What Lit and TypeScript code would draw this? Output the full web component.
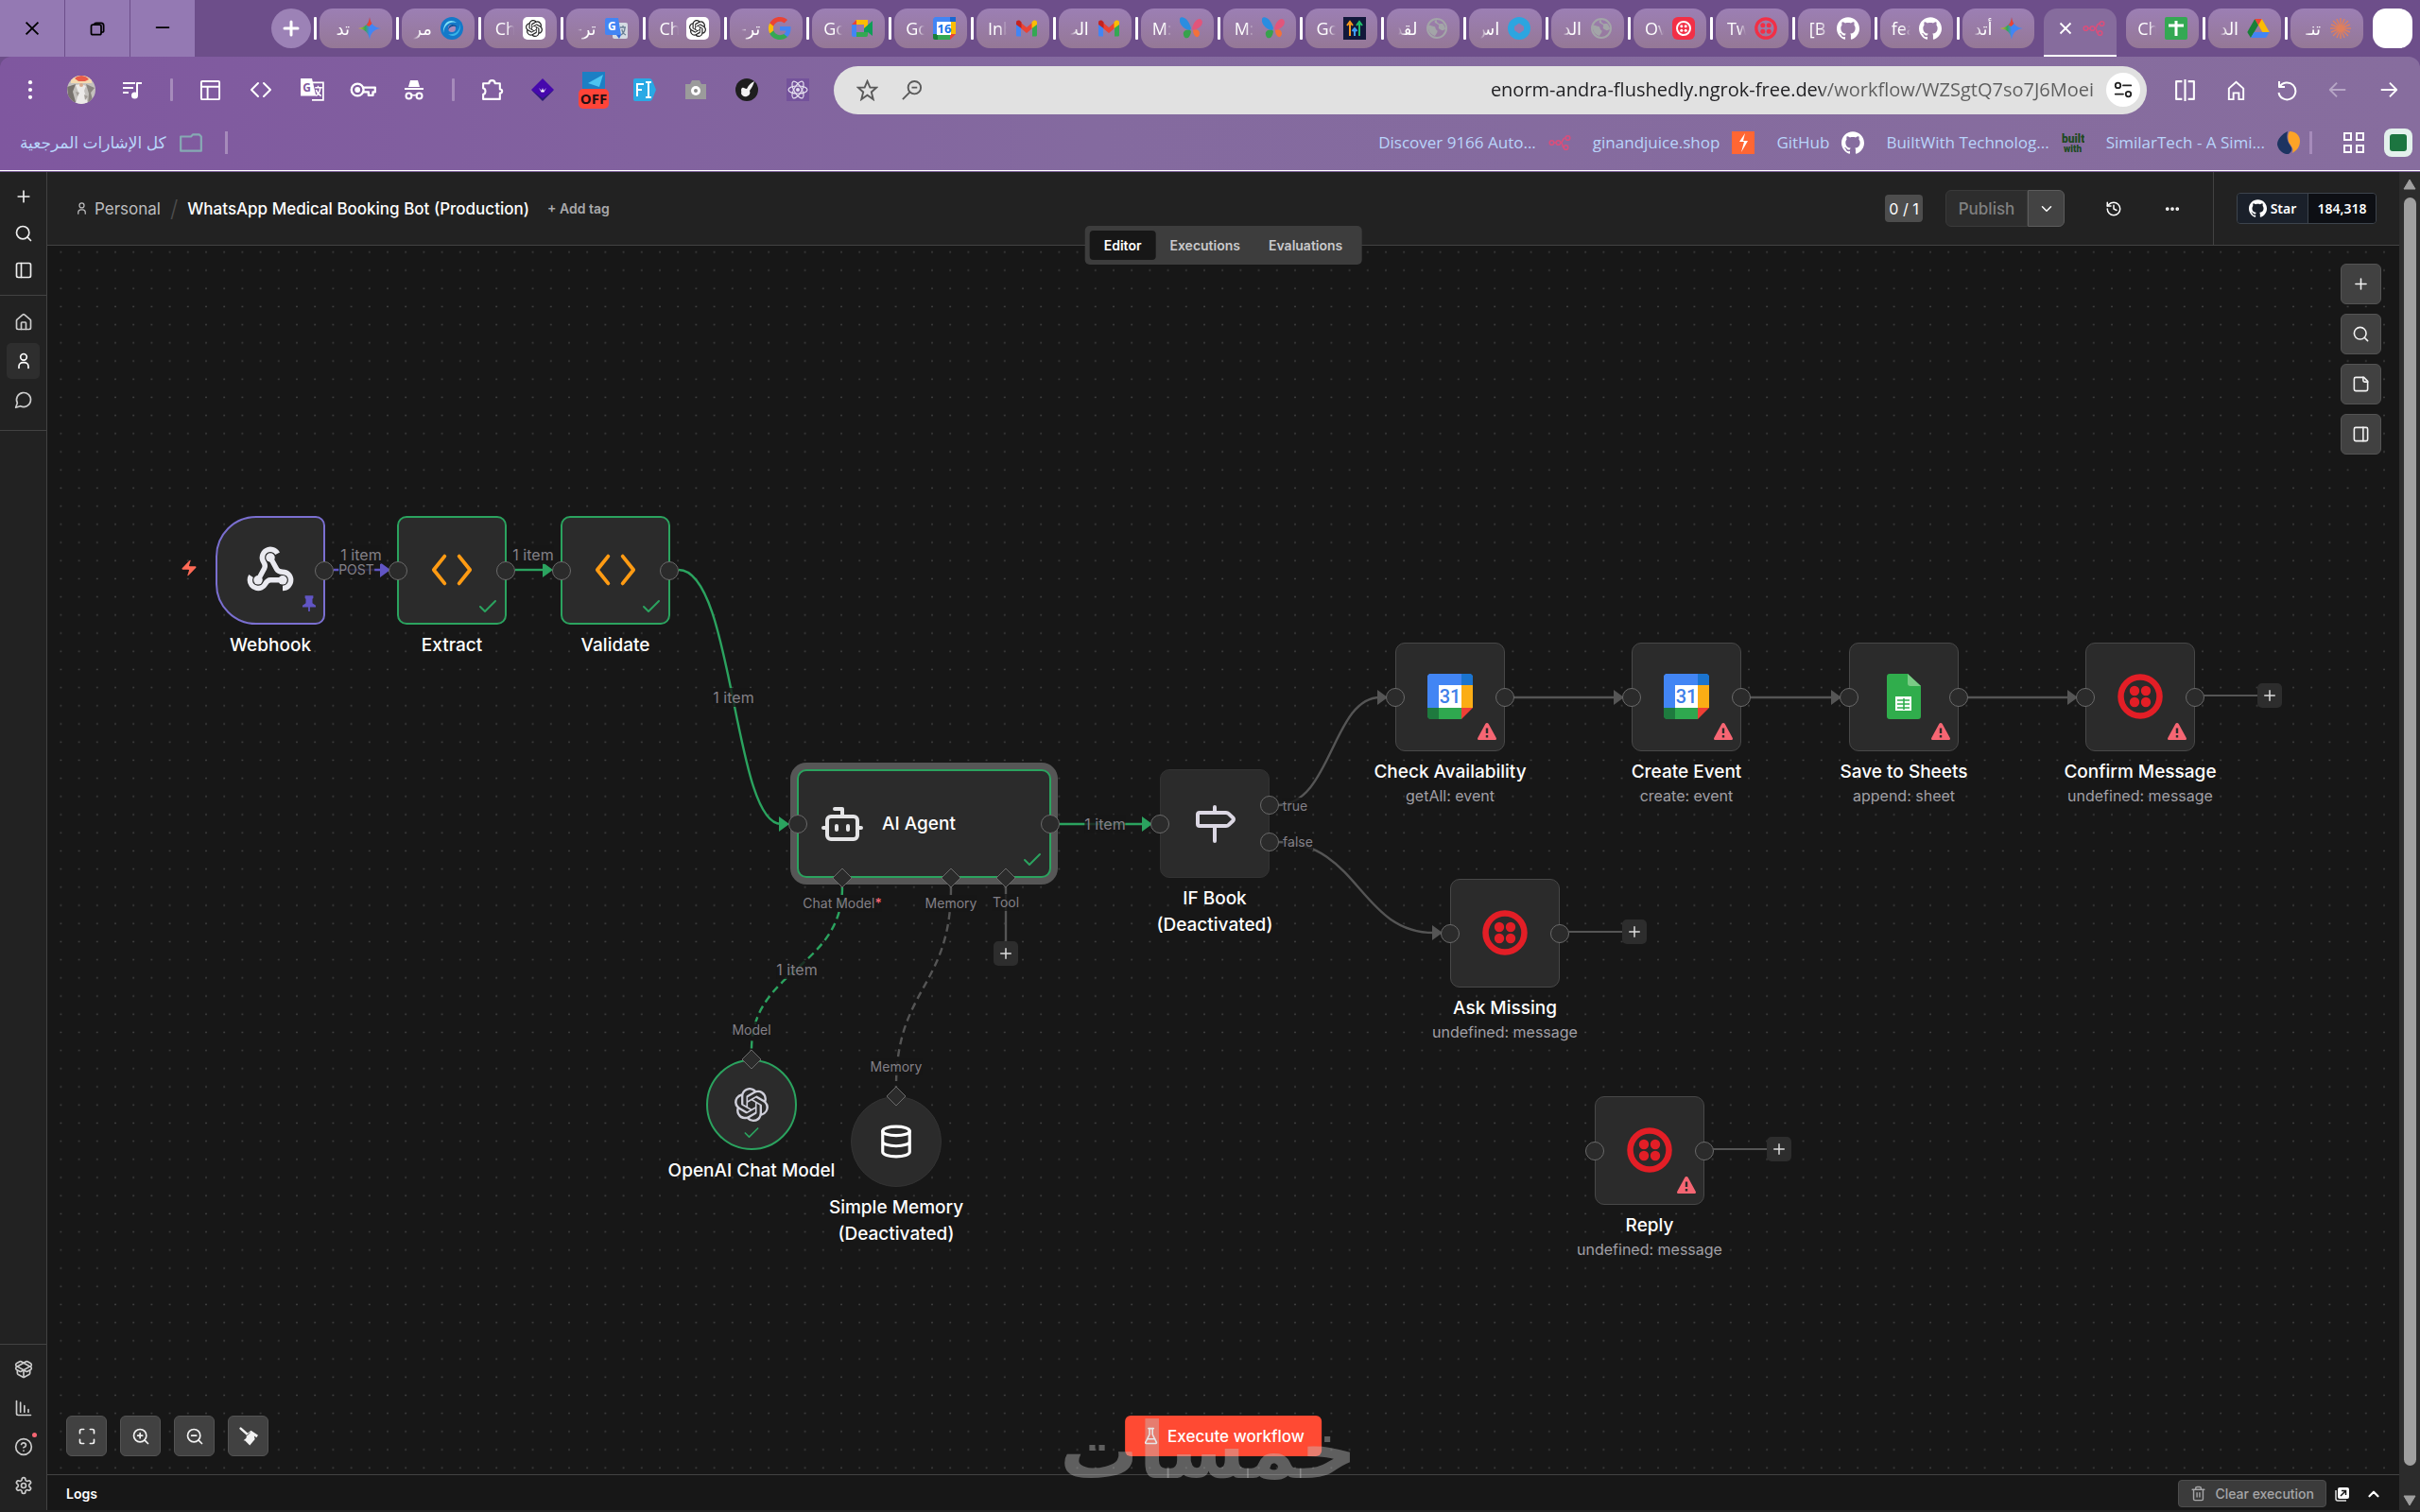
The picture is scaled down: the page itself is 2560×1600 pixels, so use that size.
import { LitElement, html, svg, css, nothing, type TemplateResult } from "lit";
import { customElement, property } from "lit/decorators.js";
import { classMap } from "lit/directives/class-map.js";
import { styleMap } from "lit/directives/style-map.js";

type Drawing = TemplateResult | TemplateResult[];

/* ---------- icon helpers ---------- */

const line = (body: Drawing, size = 20, width = 2) => html`<svg
  viewBox="0 0 24 24" width=${size} height=${size} fill="none" stroke="currentColor"
  stroke-width=${width} stroke-linecap="round" stroke-linejoin="round" aria-hidden="true">${body}</svg>`;

const solid = (body: Drawing, size = 24) => html`<svg
  viewBox="0 0 24 24" width=${size} height=${size} fill="currentColor" aria-hidden="true">${body}</svg>`;

const plus = svg`<path d="M5 12h14M12 5v14"/>`;
const search = svg`<circle cx="11" cy="11" r="8"/><path d="m21 21-4.3-4.3"/>`;
const panelLeft = svg`<rect x="3" y="3" width="18" height="18" rx="2"/><path d="M9 3v18"/>`;
const panelRight = svg`<rect x="3" y="3" width="18" height="18" rx="2"/><path d="M15 3v18"/>`;
const house = svg`<path d="M15 21v-8a1 1 0 0 0-1-1h-4a1 1 0 0 0-1 1v8"/><path d="M3 10a2 2 0 0 1 .709-1.528l7-6a2 2 0 0 1 2.582 0l7 6A2 2 0 0 1 21 10v9a2 2 0 0 1-2 2H5a2 2 0 0 1-2-2z"/>`;
const userRound = svg`<path d="M18 21v-2a5 5 0 0 0-5-5h-2a5 5 0 0 0-5 5v2"/><circle cx="12" cy="7" r="4"/>`;
const messageCircle = svg`<path d="M7.9 20A9 9 0 1 0 4 16.1L2 22Z"/>`;
const packageOpen = svg`<path d="M12 22v-9"/><path d="M15.17 2.21a1.67 1.67 0 0 1 1.63 0L21 4.57a1.93 1.93 0 0 1 0 3.36L8.82 14.79a1.655 1.655 0 0 1-1.64 0L3 12.43a1.93 1.93 0 0 1 0-3.36z"/><path d="M20 13v3.87a2.06 2.06 0 0 1-1.11 1.83l-6 3.08a1.93 1.93 0 0 1-1.78 0l-6-3.08A2.06 2.06 0 0 1 4 16.87V13"/><path d="M21 12.43a1.93 1.93 0 0 0 0-3.36L8.83 2.2a1.64 1.64 0 0 0-1.63 0L3 4.57a1.93 1.93 0 0 0 0 3.36l12.18 6.86a1.636 1.636 0 0 0 1.63 0z"/>`;
const chartBar = svg`<path d="M3 3v16a2 2 0 0 0 2 2h16"/><path d="M8 17V5M13 17V9M18 17v-3"/>`;
const helpCircle = svg`<circle cx="12" cy="12" r="10"/><path d="M9.09 9a3 3 0 0 1 5.83 1c0 2-3 3-3 3"/><path d="M12 17h.01"/>`;
const settings = svg`<path d="M12.22 2h-.44a2 2 0 0 0-2 2v.18a2 2 0 0 1-1 1.73l-.43.25a2 2 0 0 1-2 0l-.15-.08a2 2 0 0 0-2.73.73l-.22.38a2 2 0 0 0 .73 2.73l.15.1a2 2 0 0 1 1 1.72v.51a2 2 0 0 1-1 1.74l-.15.09a2 2 0 0 0-.73 2.73l.22.38a2 2 0 0 0 2.73.73l.15-.08a2 2 0 0 1 2 0l.43.25a2 2 0 0 1 1 1.73V20a2 2 0 0 0 2 2h.44a2 2 0 0 0 2-2v-.18a2 2 0 0 1 1-1.73l.43-.25a2 2 0 0 1 2 0l.15.08a2 2 0 0 0 2.73-.73l.22-.39a2 2 0 0 0-.73-2.73l-.15-.08a2 2 0 0 1-1-1.74v-.5a2 2 0 0 1 1-1.74l.15-.09a2 2 0 0 0 .73-2.73l-.22-.38a2 2 0 0 0-2.73-.73l-.15.08a2 2 0 0 1-2 0l-.43-.25a2 2 0 0 1-1-1.73V4a2 2 0 0 0-2-2z"/><circle cx="12" cy="12" r="3"/>`;
const history = svg`<path d="M3 12a9 9 0 1 0 9-9 9.75 9.75 0 0 0-6.74 2.74L3 8"/><path d="M3 3v5h5"/><path d="M12 7v5l4 2"/>`;
const ellipsis = svg`<circle cx="12" cy="12" r="1"/><circle cx="19" cy="12" r="1"/><circle cx="5" cy="12" r="1"/>`;
const chevronDown = svg`<path d="m6 9 6 6 6-6"/>`;
const chevronUp = svg`<path d="m18 15-6-6-6 6"/>`;
const stickyNote = svg`<path d="M16 3H5a2 2 0 0 0-2 2v14a2 2 0 0 0 2 2h14a2 2 0 0 0 2-2V8Z"/><path d="M15 3v4a2 2 0 0 0 2 2h4"/>`;
const maximize = svg`<path d="M8 3H5a2 2 0 0 0-2 2v3M21 8V5a2 2 0 0 0-2-2h-3M3 16v3a2 2 0 0 0 2 2h3M16 21h3a2 2 0 0 0 2-2v-3"/>`;
const zoomIn = svg`<circle cx="11" cy="11" r="8"/><path d="m21 21-4.35-4.35M11 8v6M8 11h6"/>`;
const zoomOut = svg`<circle cx="11" cy="11" r="8"/><path d="m21 21-4.35-4.35M8 11h6"/>`;
const broom = svg`<path d="M2 2 10.500 9.500" stroke="currentColor" stroke-width="3" stroke-linecap="round"/><path d="M9.500 9 15 4.500l9 6-2 3-3-2 1 4-6.500 8-6-6-2-.5 3.500-3z"/><path d="m8.500 12 5.500-5" stroke="#424242" stroke-width="1"/>`;
const flask = svg`<path d="M10 2v7.500a2 2 0 0 1-.2.9L4.700 20.550a1 1 0 0 0 .9 1.450h12.760a1 1 0 0 0 .9-1.450L14.200 10.400a2 2 0 0 1-.2-.9V2"/><path d="M8.500 2h7M7 16h10"/>`;
const trash = svg`<path d="M3 6h18M19 6v14a2 2 0 0 1-2 2H7a2 2 0 0 1-2-2V6M8 6V4a2 2 0 0 1 2-2h4a2 2 0 0 1 2 2v2M10 11v6M14 11v6"/>`;
const check = svg`<path d="M20 6 9 17l-5-5"/>`;
const zap = svg`<path d="M4 14a1 1 0 0 1-.78-1.630l9.900-10.200a.5.5 0 0 1 .86.460l-1.920 6.020A1 1 0 0 0 13 10h7a1 1 0 0 1 .78 1.630l-9.900 10.200a.5.5 0 0 1-.86-.460l1.920-6.020A1 1 0 0 0 11 14z"/>`;
const github = svg`<path d="M12 .297c-6.630 0-12 5.373-12 12 0 5.303 3.438 9.800 8.205 11.385.6.113.82-.258.82-.577 0-.285-.01-1.040-.015-2.040-3.338.724-4.042-1.610-4.042-1.610C4.422 18.070 3.633 17.700 3.633 17.700c-1.087-.744.084-.729.084-.729 1.205.084 1.838 1.236 1.838 1.236 1.070 1.835 2.809 1.305 3.495.998.108-.776.417-1.305.76-1.605-2.665-.3-5.466-1.332-5.466-5.930 0-1.310.465-2.380 1.235-3.220-.135-.303-.54-1.523.105-3.176 0 0 1.005-.322 3.300 1.230.96-.267 1.980-.399 3-.405 1.020.006 2.040.138 3 .405 2.280-1.552 3.285-1.230 3.285-1.230.645 1.653.24 2.873.12 3.176.765.84 1.230 1.910 1.230 3.220 0 4.610-2.805 5.625-5.475 5.920.42.36.81 1.096.81 2.220 0 1.606-.015 2.896-.015 3.286 0 .315.21.69.825.57C20.565 22.092 24 17.592 24 12.297c0-6.627-5.373-12-12-12"/>`;
const openai = svg`<path d="M22.2819 9.8211a5.9847 5.9847 0 0 0-.5157-4.9108 6.0462 6.0462 0 0 0-6.5098-2.9A6.0651 6.0651 0 0 0 4.9807 4.1818a5.9847 5.9847 0 0 0-3.9977 2.9 6.0462 6.0462 0 0 0 .7427 7.0966 5.98 5.98 0 0 0 .511 4.9107 6.051 6.051 0 0 0 6.5146 2.9001A5.9847 5.9847 0 0 0 13.2599 24a6.0557 6.0557 0 0 0 5.7718-4.2058 5.9894 5.9894 0 0 0 3.9977-2.9001 6.0557 6.0557 0 0 0-.7475-7.0729zm-9.022 12.6081a4.4755 4.4755 0 0 1-2.8764-1.0408l.1419-.0804 4.7783-2.7582a.7948.7948 0 0 0 .3927-.6813v-6.7369l2.02 1.1686a.071.071 0 0 1 .038.052v5.5826a4.504 4.504 0 0 1-4.4945 4.4944zm-9.6607-4.1254a4.4708 4.4708 0 0 1-.5346-3.0137l.142.0852 4.783 2.7582a.7712.7712 0 0 0 .7806 0l5.8428-3.3685v2.3324a.0804.0804 0 0 1-.0332.0615L9.74 19.9502a4.4992 4.4992 0 0 1-6.1408-1.6464zM2.3408 7.8956a4.485 4.485 0 0 1 2.3655-1.9728V11.6a.7664.7664 0 0 0 .3879.6765l5.8144 3.3543-2.0201 1.1685a.0757.0757 0 0 1-.071 0l-4.8303-2.7865A4.504 4.504 0 0 1 2.3408 7.872zm16.5963 3.8558L13.1038 8.364 15.1192 7.2a.0757.0757 0 0 1 .071 0l4.8303 2.7913a4.4944 4.4944 0 0 1-.6765 8.1042v-5.6772a.79.79 0 0 0-.407-.667zm2.0107-3.0231l-.142-.0852-4.7735-2.7818a.7759.7759 0 0 0-.7854 0L9.409 9.2297V6.8974a.0662.0662 0 0 1 .0284-.0615l4.8303-2.7866a4.4992 4.4992 0 0 1 6.6802 4.66zM8.3065 12.863l-2.02-1.1638a.0804.0804 0 0 1-.038-.0567V6.0742a4.4992 4.4992 0 0 1 7.3757-3.4537l-.142.0805L8.704 5.459a.7948.7948 0 0 0-.3927.6813zm1.0976-2.3654l2.602-1.4998 2.6069 1.4998v2.9994l-2.5974 1.4997-2.6067-1.4997Z"/>`;
const n8n = svg`<g fill="none" stroke="#d94f7c" stroke-width="1.600"><circle cx="3.500" cy="12" r="2.300"/><circle cx="10.500" cy="12" r="2.300"/><circle cx="20.500" cy="7" r="2.300"/><circle cx="18.500" cy="17" r="2.300"/><path d="M6 12h2M13 12c3 0 1-5 5-5M13 12c3 0 1 5 3 5"/></g>`;

const hues: Record<string, TemplateResult> = {
  gemini: svg`<defs><linearGradient id="gem" x1="0" y1="0" x2="1" y2="0"><stop offset="0" stop-color="#fbbc04"/><stop offset=".3" stop-color="#34a853"/><stop offset=".5" stop-color="#4285f4"/><stop offset="1" stop-color="#4285f4"/></linearGradient></defs><path fill="url(#gem)" d="M12 0c1 7 4.500 11 12 12-7.500 1-11 5-12 12-1-7-4.500-11-12-12C7.500 11 11 7 12 0z"/><path fill="#ea4335" d="M12 0c.6 3 1.200 5 2.500 7L11.500 10 8.500 8.500C10.500 7 11.300 4 12 0z"/>`,
  swirl: svg`<circle cx="12" cy="12" r="12" fill="#1479c9"/><path d="M3 17c1-9 7-13 14-11-6-5-15-1-14 11z" fill="#7fe0f5"/><path d="M21 7c-1 9-6 12-13 11 6 5 14 0 13-11z" fill="#39b5e8"/><circle cx="12" cy="12" r="4" fill="#a58abb"/><path d="M8 14c2-5 7-5 10-3-3-5-10-4-10 3z" fill="#0b4f96"/>`,
  chatgpt: svg`<rect width="24" height="24" rx="5" fill="#fff"/><g fill="#222" transform="translate(3 3) scale(.75)">${openai}</g>`,
  translate: svg`<rect x="8" y="6" width="16" height="17" rx="2" fill="#d5dbe2"/><path d="M2 1h12l3 18H2a2 2 0 0 1-2-2V3c0-1 1-2 2-2z" fill="#4285f4"/><path d="m12 19 3 4 2-4z" fill="#3367d6"/><text x="3" y="14" font-size="12" font-family="Open Sans, sans-serif" font-weight="700" fill="#fff">G</text><path d="M16 11h6M19 9v2M17 19c3-2 4-5 4-8M18 13c0 3 2 5 4 6" stroke="#6b7f95" fill="none" stroke-width="1.300"/>`,
  google: svg`<path fill="#4285F4" d="M23.500 12.270c0-.8-.07-1.600-.2-2.300H12v4.500h6.500c-.28 1.500-1.100 2.700-2.400 3.500v3h3.900c2.250-2.100 3.500-5.100 3.500-8.700z"/><path fill="#34A853" d="M12 24c3.240 0 5.960-1.070 7.950-2.900l-3.900-3c-1.070.72-2.430 1.150-4.050 1.150-3.120 0-5.760-2.100-6.700-4.940H1.290v3.100C3.260 21.300 7.300 24 12 24z"/><path fill="#FBBC05" d="M5.300 14.300a7.200 7.200 0 0 1 0-4.600V6.600H1.290a12 12 0 0 0 0 10.800z"/><path fill="#EA4335" d="M12 4.750c1.770 0 3.350.6 4.600 1.800l3.430-3.430C17.950 1.190 15.230 0 12 0 7.300 0 3.260 2.700 1.290 6.600l4 3.100C6.240 6.860 8.880 4.750 12 4.750z"/>`,
  meet: svg`<path d="M5 3h13v8l-4 5H5z" fill="#fbbc04"/><path d="M1 8v11a2 2 0 0 0 2 2h3V8z" fill="#4285f4"/><path d="M6 3v5H1z" fill="#ea4335"/><path d="M6 16h12v3a2 2 0 0 1-2 2H6z" fill="#34a853"/><path d="m14 12 9-8v16l-5-4h-4z" fill="#0f9d58"/><rect x="6" y="8" width="8" height="8" fill="#9878b0"/>`,
  gcal16: svg`<path d="M2 0h16v5H0V2z" fill="#4285f4"/><path d="M18 0h6v5h-6z" fill="#1967d2"/><path d="M0 5h5v13H0z" fill="#4285f4"/><path d="M18 5h6v13h-6z" fill="#fbbc04"/><path d="M5 18h13v6H5z" fill="#34a853"/><path d="M0 18h5v6H2a2 2 0 0 1-2-2z" fill="#188038"/><path d="M18 18h6l-6 6z" fill="#ea4335"/><rect x="4" y="5" width="15" height="14" fill="#fff"/><text x="12" y="17" text-anchor="middle" font-size="13" font-weight="700" font-family="Open Sans, sans-serif" fill="#1a73e8">16</text>`,
  gmail: svg`<path d="M1 7v12c0 1 .6 1.500 1.500 1.500H6V9z" fill="#4285f4"/><path d="M18 9v11.500h3.500c1 0 1.500-.6 1.500-1.500V6z" fill="#34a853"/><path d="M6 12V6l6 5 6-5v6l-6 5z" fill="#ea4335"/><path d="M1 8V6c0-2.500 2.500-3 4-2l1.500 1.200V12z" fill="#c5221f"/><path d="M23 8V6c0-2.500-2.500-3-4-2l-1.500 1.200V12z" fill="#fbbc04"/>`,
  butterfly: svg`<path d="M12 12C9 0 1-2 0 2c-1 5 4 11 11 12z" fill="#2a8de0"/><path d="M13 12C15 4 20 0 23 3c3 4-2 10-9 11z" fill="#e2557b"/><path d="M11 14c-5-1-8 1-7 5 1 5 7 5 8-4z" fill="#37a24c"/><path d="M14 14c4-2 7 0 7 4-1 5-6 4-7-3z" fill="#f3713a"/>`,
  arrows: svg`<rect width="24" height="24" fill="#11183a"/><g fill="none" stroke-width="2"><path d="M7 20V7M4 9l3-4 3 4" stroke="#fb9a1c"/><path d="M12 20v-6M9.500 15l2.500-3 2.500 3" stroke="#3f9df6"/><path d="M17 20V7M14 9l3-4 3 4" stroke="#21c06b"/></g>`,
  globe: svg`<circle cx="12" cy="12" r="10" fill="none" stroke="#a3a5a8" stroke-width="2"/><path d="M3 9c3-1 4 1 6 1s1 3 3 4-1 4-2 6c-4-1-8-5-7-11zM12 3c-1 2 1 3 2 4s4-1 5 1 2 3 2 5c-2 0-2 2-4 1s-4-2-3-4-3-3-4-4 0-3 2-3z" fill="#a3a5a8"/>`,
  ring: svg`<circle cx="12" cy="12" r="12" fill="#2ca5e0"/><path d="M12 6.500 17 10v4l-5 3.500L7 14v-4z" fill="#947aae"/>`,
  twilioBox: svg`<rect width="24" height="24" rx="6" fill="#f22f46"/><circle cx="12" cy="12" r="7" fill="none" stroke="#fff" stroke-width="2"/><g fill="#fff"><circle cx="9.800" cy="9.800" r="1.500"/><circle cx="14.200" cy="9.800" r="1.500"/><circle cx="9.800" cy="14.200" r="1.500"/><circle cx="14.200" cy="14.200" r="1.500"/></g>`,
  twilio: svg`<circle cx="12" cy="12" r="10.200" fill="none" stroke="#f22f46" stroke-width="3.300"/><g fill="#f22f46"><circle cx="8.800" cy="8.800" r="2.500"/><circle cx="15.200" cy="8.800" r="2.500"/><circle cx="8.800" cy="15.200" r="2.500"/><circle cx="15.200" cy="15.200" r="2.500"/></g>`,
  github: svg`<g fill="#fff">${github}</g>`,
  n8n,
  sheetsCross: svg`<rect width="24" height="24" rx="2" fill="#34a853"/><path d="M12 4v16M4 9h16" stroke="#fff" stroke-width="3"/>`,
  drive: svg`<path d="M8.300 2h7.400l8 14h-7.400z" fill="#fbbc04"/><path d="M8.300 2 12 8.500 4 22 .3 16z" fill="#188038"/><path d="M8.300 2h7.400L12 8.500z" fill="#ea4335"/><path d="M7.500 16h16.200L20 22H4z" fill="#4285f4"/>`,
  claude: svg`<path d="M12 1v22M1 12h22M4 4l16 16M20 4 4 20M8 2l8 20M16 2 8 22M2 8l20 8M2 16l20-8" stroke="#e07f5c" stroke-width="1.400"/>`,
};

/* ---------- browser chrome data ---------- */

interface Tab { text: string; icon: string; active?: boolean; bar?: boolean }
const tabs: Tab[] = [
  { text: "تد", icon: "gemini" }, { text: "مر", icon: "swirl" }, { text: "Ch", icon: "chatgpt" },
  { text: "تر-", icon: "translate" }, { text: "Ch", icon: "chatgpt" }, { text: "تر-", icon: "google" },
  { text: "Go", icon: "meet" }, { text: "Go", icon: "gcal16" }, { text: "Inb", icon: "gmail" },
  { text: "الب", icon: "gmail" }, { text: "M:", icon: "butterfly" }, { text: "M:", icon: "butterfly" },
  { text: "Go", icon: "arrows" }, { text: "لقد", icon: "globe" }, { text: "اس", icon: "ring" },
  { text: "الد", icon: "globe" }, { text: "Ov", icon: "twilioBox" }, { text: "Tw", icon: "twilio" },
  { text: "[B", icon: "github" }, { text: "fea", icon: "github" }, { text: "أتد", icon: "gemini" },
  { text: "", icon: "n8n", active: true, bar: false }, { text: "Ch", icon: "sheetsCross", bar: false },
  { text: "الد", icon: "drive" }, { text: "تنـ", icon: "claude" },
];

const toolIcons: [string, TemplateResult][] = [
  ["Menu", solid(svg`<circle cx="12" cy="3.500" r="2.300"/><circle cx="12" cy="12" r="2.300"/><circle cx="12" cy="20.500" r="2.300"/>`, 22)],
  ["Profile", html`<svg viewBox="0 0 30 30" width="30" height="30" aria-hidden="true"><defs><clipPath id="av"><circle cx="15" cy="15" r="15"/></clipPath></defs><g clip-path="url(#av)"><rect width="30" height="30" fill="#c4c1bd"/><path d="M4 0h22v8H4z" fill="#f3d9b0"/><path d="M8 3c4-4 11-4 15 1l-4 2h-7z" fill="#e85c4a"/><path d="m0 12 9-3-3 8 3 11-7 2z" fill="#77726d"/><path d="m9 10 6-1 5 2-2 5 4 14H9l3-12z" fill="#eceae8"/><path d="m20 9 9 4-4 5 2 8-5 4 1-11z" fill="#8a857f"/><circle cx="15" cy="10" r="2" fill="#d8a98b"/><path d="m9 17 4 1-2 4zM18 20l4 2-3 4z" fill="#a39e98"/></g></svg>`],
  ["Media", line(svg`<path d="M2 5h13M2 10h11M2 15h6M17 18V5h5" stroke-linecap="butt"/><circle cx="14.500" cy="18" r="2.500" fill="currentColor"/>`, 24, 2)],
  ["", html``],
  ["Reading panel", line(svg`<rect x="2" y="2" width="20" height="20" rx="1"/><path d="M2 8h20M9 8v14"/>`, 23, 2)],
  ["Developer", line(svg`<path d="m9 5-7 7 7 7M15 5l7 7-7 7"/>`, 24, 2)],
  ["Translate", html`<svg viewBox="0 0 24 24" width="26" height="26" aria-hidden="true"><path d="M1 1h11l4 17H1z" fill="#fff"/><path d="M12 5h11v17H12" fill="none" stroke="#fff" stroke-width="1.600"/><text x="3" y="14" font-size="11" font-weight="700" font-family="Open Sans, sans-serif" fill="#7f5b9f">G</text><path d="M15 10h7M18 8v2M16 18c3-2 4-5 4-8M16 12c1 3 3 5 5 6" stroke="#fff" fill="none" stroke-width="1.400"/></svg>`],
  ["Passwords", line(svg`<circle cx="7" cy="12" r="5.500"/><circle cx="7" cy="12" r="1.500" fill="currentColor"/><path d="M12 10h11v4h-2v3h-4v-3h-5"/>`, 28, 2)],
  ["Incognito", solid(svg`<path d="M8 2h8l2 7H6zM2 10h20v2H2z"/><path d="M12 18c-2-1-2-1-4 0m4 0c2-1 2-1 4 0" stroke="currentColor" stroke-width="1.500" fill="none"/><circle cx="6.500" cy="18.500" r="3" fill="none" stroke="currentColor" stroke-width="2"/><circle cx="17.500" cy="18.500" r="3" fill="none" stroke="currentColor" stroke-width="2"/>`)],
  ["", html``],
  ["Extensions", line(svg`<path d="M3 5h6c0-4 6-4 6 0h5v6c3 0 3 4 0 4v6H3v-5c3 0 3-6 0-6z"/>`, 25, 2)],
  ["Wappalyzer", html`<svg viewBox="0 0 24 24" width="24" height="24" aria-hidden="true"><path d="m12 0 12 12-12 11L0 12z" fill="#4608ad"/><path d="m0 12 12 9 12-9-12 12z" fill="#2b1b74"/><path d="m8 10 3 3 1-3 1 3 3-3-3 5-1-1-1 1z" fill="#fff"/></svg>`],
  ["Blocker off", html`<svg viewBox="0 0 32 40" width="32" height="40" aria-hidden="true"><rect x="4" y="1" width="24" height="20" fill="#1c7fc4"/><path d="M10 13 26 4l-4 13z" fill="#4cc3f0"/><rect y="19" width="32" height="21" rx="5" fill="#ff4438"/><text x="16" y="35" text-anchor="middle" font-size="15" font-weight="700" font-family="Open Sans, sans-serif" fill="#241014">OFF</text></svg>`],
  ["Font inspector", html`<svg viewBox="0 0 24 24" width="24" height="24" aria-hidden="true"><path d="M2 0h15q2 0 3 2l4 10-4 10q-1 2-3 2H2q-2 0-2-2V2q0-2 2-2z" fill="#29a9e5"/><path d="M4 19V6h7M4 12h5M16 4v16M13 4h6M13 20h6" stroke="#fff" stroke-width="2" fill="none"/></svg>`],
  ["Screenshot", html`<svg viewBox="0 0 24 24" width="24" height="24" aria-hidden="true"><path d="M1 6h5l2-4h8l2 4h5v16H1z" fill="#9b9b9b"/><circle cx="12" cy="13" r="5" fill="#fff"/><circle cx="12" cy="13" r="2" fill="#8a8a8a"/></svg>`],
  ["Color picker", html`<svg viewBox="0 0 24 24" width="24" height="24" aria-hidden="true"><circle cx="12" cy="12" r="12" fill="#1e1e1e"/><path d="M20 3c-4 2-6 4-8 8-2 0-3-2-5-1-2 2 0 4-1 6 1 2 3 4 6 3 3-1 4-3 3-6 2-3 4-6 5-10z" fill="#f2f2f2"/></svg>`],
  ["React tools", html`<svg viewBox="0 0 24 24" width="24" height="24" aria-hidden="true"><rect width="24" height="24" fill="#74529b"/><g fill="none" stroke="#e6e0f0" stroke-width="1.200"><ellipse cx="12" cy="12" rx="10" ry="4"/><ellipse cx="12" cy="12" rx="10" ry="4" transform="rotate(60 12 12)"/><ellipse cx="12" cy="12" rx="10" ry="4" transform="rotate(120 12 12)"/></g><circle cx="12" cy="12" r="2" fill="#e6e0f0"/></svg>`],
];

const navIcons: [string, TemplateResult, boolean][] = [
  ["Split view", line(svg`<path d="M12 1v22M9 3H3v18h6M15 3h6v18h-6" stroke-linecap="butt"/>`, 25, 2), false],
  ["Home", line(svg`<path d="M4 10v12h5v-7h6v7h5V10l-8-7z" stroke-linejoin="miter"/>`, 23, 2), false],
  ["Reload", line(svg`<path d="M4 3v6h6M4.500 9a9 9 0 1 1-1 6" stroke-linecap="butt"/>`, 24, 2), false],
  ["Back", line(svg`<path d="M21 12H3M11 4l-8 8 8 8" stroke-linecap="butt"/>`, 22, 2), true],
  ["Forward", line(svg`<path d="M3 12h18M13 4l8 8-8 8" stroke-linecap="butt"/>`, 22, 2), false],
];

const bookmarks: [string, TemplateResult][] = [
  ["Discover 9166 Auto...", solid(n8n)],
  ["ginandjuice.shop", solid(svg`<rect width="24" height="24" fill="#ff6633"/><path d="M14 2 8 11h5l-3 11 7-12h-5z" fill="#fff"/>`)],
  ["GitHub", solid(hues.github)],
  ["BuiltWith Technolog...", solid(svg`<g fill="#1d4a22" font-family="Roboto, sans-serif" font-weight="900"><text x="0" y="12" font-size="12">built</text><text x="2" y="22" font-size="10">with</text></g>`)],
  ["SimilarTech - A Simi...", solid(svg`<path d="M11 0C5 3 0 8 0 14c1 6 7 11 12 10 3-2 4-4 3-7-3-5-6-8-4-17z" fill="#1d3461"/><path d="M13 0c6 0 11 4 11 10 0 6-3 10-8 13 2-5-2-8-4-12-1-5-1-8 1-11z" fill="#fca326"/>`)],
];

/* ---------- workflow data ---------- */

/* Pan of the canvas: flow coordinates minus this give canvas pixels. */
const PAN = { x: 50, y: 260 };

type Status = "success" | "pinned" | "error" | "idle";
interface FlowNode {
  title: string[]; sub?: string; x: number; y: number; icon: TemplateResult;
  status: Status; shape?: "trigger" | "wide" | "round"; off?: boolean;
  input?: boolean; outputs?: number; done?: boolean; add?: boolean;
}

const codeIcon = html`<svg viewBox="0 0 48 36" width="46" height="36" fill="none" stroke="#ff9b13" stroke-width="4" stroke-linecap="round" stroke-linejoin="round" aria-hidden="true"><path d="M16 3 4 18l12 15M32 3l12 15-12 15"/></svg>`;
const twilioIcon = html`<svg viewBox="0 0 48 48" width="48" height="48" fill="#e31e26" aria-hidden="true"><circle cx="24" cy="24" r="20.500" fill="none" stroke="#e31e26" stroke-width="6.500"/><circle cx="18" cy="18" r="5.200"/><circle cx="30" cy="18" r="5.200"/><circle cx="18" cy="30" r="5.200"/><circle cx="30" cy="30" r="5.200"/></svg>`;
const calendarIcon = html`<svg viewBox="0 0 48 48" width="48" height="48" aria-hidden="true"><path d="M2 0h34v12H0V2z" fill="#4285f4"/><path d="M0 12h12v24H0z" fill="#4285f4"/><path d="M36 0h10l2 2v10H36z" fill="#1b74cf"/><path d="M36 12h12v24H36z" fill="#fbad15"/><path d="M12 36h24v12H12z" fill="#2fa84f"/><path d="M0 36h12v12H2l-2-2z" fill="#1e7a3e"/><path d="M36 36h12L36 48z" fill="#ee3f35"/><rect x="12" y="12" width="24" height="24" fill="#fff"/><text x="24" y="31" text-anchor="middle" font-size="20" font-weight="500" font-family="Roboto, sans-serif" fill="#3f7fe8">31</text></svg>`;
const sheetsIcon = html`<svg viewBox="0 0 36 48" width="36" height="48" aria-hidden="true"><path d="M3 0h19l14 13v32a3 3 0 0 1-3 3H3a3 3 0 0 1-3-3V3a3 3 0 0 1 3-3z" fill="#30ad4c"/><path d="M22 0v10a3 3 0 0 0 3 3h11z" fill="#7bcb86"/><path d="M9 24h17v15H9z" fill="#fff"/><path d="M11 28h13M11 32h13M11 36h13M18 26v12" stroke="#30ad4c" stroke-width="1.600"/></svg>`;
const webhookIcon = html`<svg viewBox="0 0 24 24" width="52" height="52" fill="none" stroke="#eaeaf0" stroke-width="2.500" stroke-linecap="butt" stroke-linejoin="round" aria-hidden="true"><path d="M18 16.980h-5.990c-1.100 0-1.950.94-2.480 1.900A4 4 0 0 1 2 17c.01-.7.2-1.400.57-2"/><path d="m6 17 3.130-5.780c.53-.97.1-2.180-.5-3.100a4 4 0 1 1 6.890-4.060"/><path d="m12 6 3.130 5.730C15.660 12.700 16.900 13 18 13a4 4 0 0 1 0 8"/><g fill="#eaeaf0" stroke="none"><circle cx="12" cy="6" r="2.200"/><circle cx="6" cy="17" r="2.200"/><circle cx="18" cy="17" r="2.200"/></g></svg>`;
const botIcon = line(svg`<path d="M12 8V4H8"/><rect width="16" height="12" x="4" y="8" rx="2"/><path d="M2 14h2M20 14h2M15 13v2M9 13v2"/>`, 48, 2);
const signIcon = html`<span class="lilac">${line(svg`<path d="M12 13v8M12 3v3"/><path d="M18 6a2 2 0 0 1 1.387.56l2.307 2.220a1 1 0 0 1 0 1.440l-2.307 2.220A2 2 0 0 1 18 13H4a1 1 0 0 1-1-1V7a1 1 0 0 1 1-1z"/>`, 48, 2)}</span>`;
const dbIcon = html`<span class="bright">${line(svg`<ellipse cx="12" cy="5" rx="9" ry="3"/><path d="M3 5v14a9 3 0 0 0 18 0V5M3 12a9 3 0 0 0 18 0"/>`, 38, 2)}</span>`;
const openaiIcon = html`<span class="lilac">${solid(openai, 36)}</span>`;
const warnIcon = html`<svg viewBox="0 0 20 18" width="20" height="18" aria-label="Node has issues" role="img"><path d="M10 0c.8 0 1.300.4 1.700 1.100l8 14.600c.7 1.200 0 2.300-1.300 2.300H1.600C.3 18-.4 16.900.3 15.700l8-14.600C8.700.4 9.200 0 10 0z" fill="#f66673"/><path d="M10 5.500V11M10 13v2.500" stroke="#2b2b2b" stroke-width="2.400"/></svg>`;
const pinIcon = html`<svg viewBox="0 0 16 20" width="14" height="18" aria-label="Pinned data" role="img"><path d="M3 0h10v3l-1 1v5l4 3v2H0v-2l4-3V4L3 3z" fill="#6155c4"/><path d="M8 13v6" stroke="#6155c4" stroke-width="2"/></svg>`;

const nodes: FlowNode[] = [
  { title: ["Webhook"], x: 228, y: 546, icon: webhookIcon, status: "pinned", shape: "trigger", outputs: 1 },
  { title: ["Extract"], x: 420, y: 546, icon: codeIcon, status: "success", input: true, outputs: 1, done: true },
  { title: ["Validate"], x: 593, y: 546, icon: codeIcon, status: "success", input: true, outputs: 1, done: true },
  { title: ["AI Agent"], x: 843, y: 814, icon: botIcon, status: "success", shape: "wide", input: true, outputs: 1, done: true },
  { title: ["IF Book", "(Deactivated)"], x: 1227, y: 814, icon: signIcon, status: "idle", off: true, input: true, outputs: 2 },
  { title: ["Check Availability"], sub: "getAll: event", x: 1476, y: 680, icon: calendarIcon, status: "error", input: true, outputs: 1 },
  { title: ["Create Event"], sub: "create: event", x: 1726, y: 680, icon: calendarIcon, status: "error", input: true, outputs: 1 },
  { title: ["Save to Sheets"], sub: "append: sheet", x: 1956, y: 680, icon: sheetsIcon, status: "error", input: true, outputs: 1 },
  { title: ["Confirm Message"], sub: "undefined: message", x: 2206, y: 680, icon: twilioIcon, status: "error", input: true, outputs: 1, add: true },
  { title: ["Ask Missing"], sub: "undefined: message", x: 1534, y: 930, icon: twilioIcon, status: "idle", input: true, outputs: 1, add: true },
  { title: ["Reply"], sub: "undefined: message", x: 1687, y: 1160, icon: twilioIcon, status: "error", input: true, outputs: 1, add: true },
  { title: ["OpenAI Chat Model"], x: 747, y: 1121, icon: openaiIcon, status: "success", shape: "round", done: true },
  { title: ["Simple Memory", "(Deactivated)"], x: 900, y: 1160, icon: dbIcon, status: "idle", shape: "round", off: true },
];

interface Edge { d: string; tone: "green" | "grey" | "violet"; dashed?: boolean; tip?: [number, number] }
const edges: Edge[] = [
  { d: "M353 603H404", tone: "violet", tip: [413, 603] },
  { d: "M545 603H576", tone: "green", tip: [585, 603] },
  { d: "M718 603C776 603 776 872 826 872", tone: "green", tip: [835, 872] },
  { d: "M1121 872H1210", tone: "green", tip: [1219, 872] },
  { d: "M1351 852C1409 852 1409 738 1460 738", tone: "grey", tip: [1468, 738] },
  { d: "M1351 891C1438 891 1438 987 1517 987", tone: "grey", tip: [1526, 987] },
  { d: "M1601 738H1709", tone: "grey", tip: [1718, 738] },
  { d: "M1851 738H1939", tone: "grey", tip: [1948, 738] },
  { d: "M2081 738H2189", tone: "grey", tip: [2198, 738] },
  { d: "M891 939C891 1025 795 1025 795 1111", tone: "green", dashed: true },
  { d: "M1006 939C1006 1045 948 1045 948 1150", tone: "grey", dashed: true },
  { d: "M1064 939V996", tone: "grey" },
];

const labels: { text: string; x: number; y: number; small?: boolean; need?: boolean }[] = [
  { text: "1 item", x: 382, y: 587 }, { text: "POST", x: 377, y: 603, small: true }, { text: "1 item", x: 564, y: 587 },
  { text: "1 item", x: 776, y: 738 }, { text: "1 item", x: 1169, y: 872 }, { text: "1 item", x: 843, y: 1026 },
  { text: "true", x: 1370, y: 853, small: true }, { text: "false", x: 1373, y: 891, small: true },
  { text: "Chat Model", x: 891, y: 956, small: true, need: true }, { text: "Memory", x: 1006, y: 956, small: true },
  { text: "Tool", x: 1064, y: 955, small: true }, { text: "Model", x: 795, y: 1090, small: true },
  { text: "Memory", x: 948, y: 1129, small: true },
];

const diamonds: [number, number][] = [[891, 929], [1006, 929], [1064, 929], [795, 1121], [948, 1160]];

/* ---------- elements ---------- */

const base = css`
  * { box-sizing: border-box; }
  button, input { font: inherit; color: inherit; border: 0; background: none; margin: 0; padding: 0; }
  button { display: flex; align-items: center; justify-content: center; }
  a { color: inherit; text-decoration: none; }
  svg { display: block; flex: none; }
`;

@customElement("browser-chrome")
export class BrowserChrome extends LitElement {
  static styles = [base, css`
    :host { display: block; color: #fff; font-family: "Open Sans", "DejaVu Sans", sans-serif; }
    .strip { display: flex; align-items: center; height: 60px; background: #6d4e8a; padding-right: 8px; }
    .win { width: 68px; height: 60px; background: #9479b3; color: #000; margin-right: 1px; }
    .new { flex: none; width: 42px; height: 42px; border-radius: 50%; background: #9c82b6; margin: 0 2px 0 80px; }
    .tabs { display: flex; flex: 1; min-width: 0; height: 60px; }
    .cell { flex: 1; min-width: 0; display: flex; align-items: center; gap: 3px; padding: 0 3px 0 1px; }
    .bar { flex: none; width: 3px; height: 24px; border-radius: 1px; background: #fff; }
    .bar.none { background: transparent; }
    .tab { flex: 1; min-width: 0; height: 42px; border-radius: 14px; padding: 0 12px; justify-content: space-between;
      background: linear-gradient(#9c7fb4, #957896); }
    .tab.active { background: #866c9d; height: 51px; align-self: flex-end; border-radius: 14px 14px 0 0; border-bottom: 2px solid #fff; padding-bottom: 7px; }
    .name { width: 20px; overflow: hidden; white-space: nowrap; font-size: 18px; line-height: 28px; text-align: left;
      -webkit-mask-image: linear-gradient(90deg, #000 60%, transparent); mask-image: linear-gradient(90deg, #000 60%, transparent); }
    .name.ar { direction: rtl; text-align: right; -webkit-mask-image: linear-gradient(270deg, #000 60%, transparent); mask-image: linear-gradient(270deg, #000 60%, transparent); }
    .blank { flex: none; width: 42px; height: 42px; border-radius: 14px; background: #fff; margin-left: 7px; }
    .under { background: linear-gradient(90deg, #7f579f, #846a9f 45%, #876d9e); border-radius: 12px 12px 0 0; border-bottom: 1px solid #7b5f97; }
    .shell { background: #6d4e8a; }
    .tools { display: flex; align-items: center; height: 70px; padding: 0 6px 0 5px; }
    .tool { width: 54px; height: 54px; }
    .tool.dim { color: #b7a6c6; }
    .rule { width: 28px; display: flex; justify-content: center; }
    .rule i { width: 3px; height: 24px; background: #a68bbb; border-radius: 1px; }
    .address { flex: 1; min-width: 0; height: 51px; border-radius: 26px; background: #e1e1e1; color: #5a5a5a; display: flex; align-items: center;
      padding: 0 7px 0 24px; gap: 24px; margin: 0 13px 0 11px; }
    .url { flex: 1; min-width: 0; font-size: 20px; text-align: right; outline: 0; margin-right: -11px; line-height: 30px;
      background: linear-gradient(to left, #5d5d5d 288px, #1f1f22 288px); -webkit-background-clip: text; background-clip: text; -webkit-text-fill-color: transparent; }
    .site { flex: none; width: 36px; height: 36px; border-radius: 50%; background: #fff; color: #222; }
    .marks { display: flex; align-items: center; height: 50px; padding: 0 8px 9px 21px; color: #b9d5fb; font-size: 17px; }
    .mark { display: flex; align-items: center; gap: 13px; white-space: nowrap; margin-right: 23px; }
    .mark.last { margin-right: 10px; }
    .folder { color: #86aab4; }
    .space { flex: 1; }
    .marks .line { width: 3px; height: 24px; background: #a68bbb; }
    .apps { color: #fff; margin: 0 20px 0 32px; }
    .excel { width: 30px; height: 30px; border-radius: 8px; background: #e3f1ec; }
    .excel i { width: 18px; height: 18px; border-radius: 3px; background: #1c7540; }
    .edge { height: 1px; background: #fff; }
  `];

  private tab(t: Tab) {
    const ar = /[\u0600-\u06ff]/.test(t.text);
    return html`<div class="cell">
      <span class=${classMap({ bar: true, none: t.bar === false })}></span>
      <button class=${classMap({ tab: true, active: !!t.active })} aria-label=${t.active ? "n8n" : t.text}>
        ${t.active
          ? line(svg`<path d="M6 6l12 12M18 6 6 18" stroke-linecap="butt"/>`, 22, 2)
          : html`<span class=${classMap({ name: true, ar })}>${t.text}</span>`}
        ${solid(hues[t.icon])}
      </button>
    </div>`;
  }

  render() {
    return html`
      <div class="strip">
        <button class="win" aria-label="Close">${line(svg`<path d="M5 5l14 14M19 5 5 19" stroke-linecap="butt"/>`, 22, 2)}</button>
        <button class="win" aria-label="Restore">${line(svg`<rect x="4" y="7" width="12" height="12" rx="2"/><path d="M8 7V6q0-1 2-1h6q3 0 3 3v7q0 1-2 1"/>`, 21, 2)}</button>
        <button class="win" aria-label="Minimize">${line(svg`<path d="M5 11h14"/>`, 22, 2)}</button>
        <button class="new" aria-label="New tab">${line(plus, 24, 3)}</button>
        <div class="tabs">${tabs.map((t) => this.tab(t))}</div>
        <button class="blank" aria-label="Search tabs"></button>
      </div>
      <div class="shell"><div class="under">
        <div class="tools">
          ${toolIcons.map(([name, icon]) => name ? html`<button class="tool" aria-label=${name}>${icon}</button>` : html`<span class="rule"><i></i></span>`)}
          <div class="address">
            ${line(svg`<path d="m12 2 3 7h7l-5.500 5 2 8L12 17.500 5.500 22l2-8L2 9h7z" stroke-linejoin="miter"/>`, 23, 2)}
            ${line(svg`<circle cx="15" cy="9" r="7"/><path d="m10 14-8 8M12 9h6" stroke-linecap="butt"/>`, 23, 2)}
            <input class="url" type="text" aria-label="Address" .value=${"enorm-andra-flushedly.ngrok-free.dev/workflow/WZSgtQ7so7J6Moei"} />
            <button class="site" aria-label="Site information">${line(svg`<circle cx="6" cy="7" r="3"/><path d="M12 7h9M3 17h9"/><circle cx="18" cy="17" r="3"/>`, 22, 2)}</button>
          </div>
          ${navIcons.map(([name, icon, dim]) => html`<button class=${classMap({ tool: true, dim })} aria-label=${name}>${icon}</button>`)}
        </div>
        <div class="marks">
          <a class="mark" href="#"><span dir="rtl">كل الإشارات المرجعية</span><span class="folder">${line(svg`<path d="M2 6v14h20V6l-2-2h-6l-2 2z"/>`, 26, 2)}</span></a>
          <span class="line"></span>
          <span class="space"></span>
          ${bookmarks.map(([name, icon], i) => html`<a href="#" class=${classMap({ mark: true, last: i === bookmarks.length - 1 })}>${name}${icon}</a>`)}
          <span class="line"></span>
          <button class="apps" aria-label="Tab groups">${line(svg`<path d="M2 2h7v7H2zM15 2h7v7h-7zM2 15h7v7H2zM15 15h7v7h-7z" stroke-linejoin="miter"/>`, 24, 2)}</button>
          <button class="excel" aria-label="Sheets group"><i></i></button>
        </div>
        <div class="edge"></div>
      </div></div>`;
  }
}

@customElement("flow-node")
export class FlowNodeElement extends LitElement {
  @property({ attribute: false }) node!: FlowNode;

  static styles = [base, css`
    :host { display: block; position: absolute; color: #fff; }
    .box { position: relative; width: 116px; height: 115px; border: 1px solid #484848; border-radius: 10px; background: #2b2b2b;
      display: flex; align-items: center; justify-content: center; color: #e4e4e6; }
    .square, .trigger { padding-bottom: 2px; }
    .off { border-color: #333; padding-bottom: 0; }
    .success { border: 2px solid #2ba35f; }
    .pinned { border: 2px solid #7a6fd0; }
    .trigger { border-radius: 43px 10px 10px 43px; }
    .wide { width: 269px; box-shadow: 0 0 0 7px #565656; justify-content: flex-start; padding-left: 22px; gap: 18px; }
    .round { width: 96px; height: 96px; border-radius: 50%; }
    .wide .name { color: #fff; }
    .name { font-size: 19px; line-height: 28px; font-weight: 500; white-space: nowrap; }
    .port { position: absolute; width: 20px; height: 20px; border-radius: 50%; border: 1px solid #6a6a6a; background: #2b2b2b; top: calc(50% - 10px); }
    .in { left: -11px; }
    .out { right: -11px; }
    .yes { top: 27px; }
    .no { top: 66px; }
    .badge { position: absolute; right: 8px; bottom: 11px; color: #2ba35f; }
    .done { right: 6px; bottom: 5px; }
    .round .badge { right: 36px; bottom: 6px; }
    .lilac { color: #dcd8e4; }
    .bright { color: #fff; }
    .round .lilac { color: #cfcfda; }
    .caption { position: absolute; top: 100%; left: 50%; transform: translateX(-50%); padding-top: 8px; text-align: center; white-space: nowrap; }
    .sub { font-size: 16px; line-height: 22px; color: #a09fa5; }
    .adder { position: absolute; left: 125px; top: 43px; display: flex; align-items: center; }
    .wire { width: 57px; height: 2px; background: #555; }
    .add { width: 26px; height: 26px; border-radius: 5px; background: #2d2d2d; color: #ddd; }
  `];

  render() {
    const n = this.node;
    const wide = n.shape === "wide";
    const badge = n.done ? html`<span class="badge done">${line(check, n.shape === "round" ? 20 : 24, 2)}</span>`
      : n.status === "error" ? html`<span class="badge">${warnIcon}</span>`
      : n.status === "pinned" ? html`<span class="badge">${pinIcon}</span>` : nothing;
    return html`
      <div class=${classMap({ box: true, [n.status]: true, [n.shape ?? "square"]: true, off: !!n.off })}>
        ${n.icon}
        ${wide ? html`<span class="name">${n.title[0]}</span>` : nothing}
        ${badge}
        ${n.input ? html`<span class="port in"></span>` : nothing}
        ${n.outputs === 1 ? html`<span class="port out"></span>` : nothing}
        ${n.outputs === 2 ? html`<span class="port out yes"></span><span class="port out no"></span>` : nothing}
      </div>
      ${wide ? nothing : html`<div class="caption">
        ${n.title.map((t) => html`<div class="name">${t}</div>`)}
        ${n.sub ? html`<div class="sub">${n.sub}</div>` : nothing}
      </div>`}
      ${n.add ? html`<div class="adder"><span class="wire"></span><button class="add" aria-label="Add node">${line(plus, 18, 2)}</button></div>` : nothing}`;
  }
}

@customElement("flow-canvas")
export class FlowCanvas extends LitElement {
  static styles = [base, css`
    :host { display: block; position: relative; flex: 1; min-height: 0; background: #171717; }
    .layer { position: absolute; inset: 0; width: 100%; height: 100%; }
    .clip { position: absolute; inset: 0; overflow: hidden; }
    .green { stroke: #2ba35f; }
    .green-tip { fill: #2ba35f; }
    .grey { stroke: #555; }
    .grey-tip { fill: #555; }
    .violet { stroke: #6155c4; }
    .violet-tip { fill: #6155c4; }
    flow-node { position: absolute; }
    .label { position: absolute; transform: translate(-50%, -50%); font-size: 16px; line-height: 20px; color: #838087; background: rgba(23, 23, 23, .8); white-space: nowrap; }
    .label.small { font-size: 14px; line-height: 18px; }
    .label b { color: #f66673; font-weight: 500; }
    .tool-add { position: absolute; width: 26px; height: 26px; border-radius: 5px; background: #2d2d2d; color: #ddd; }
    .zap { position: absolute; color: #ff6a56; }
    .side { position: absolute; top: 19px; right: 19px; display: flex; flex-direction: column; gap: 10px; }
    .controls { position: absolute; left: 20px; bottom: 19px; display: flex; gap: 14px; }
    .sq { width: 43px; height: 43px; border: 1px solid #545454; border-radius: 6px; background: #414141; color: #f2f2f2; }
    .run { position: absolute; bottom: 19px; left: 50%; transform: translateX(-50%); height: 43px; padding: 0 18px; gap: 8px; border-radius: 6px;
      background: #ff4a33; color: #fff; font-size: 17px; font-weight: 500; white-space: nowrap; }
    .mark { position: absolute; left: 50%; bottom: -51px; transform: translateX(-55%); color: rgba(196, 196, 196, .42); font-family: "DejaVu Sans", sans-serif;
      font-weight: 700; font-size: 83px; line-height: 150px; white-space: nowrap; pointer-events: none; z-index: 2; }
  `];

  render() {
    const at = (x: number, y: number) => styleMap({ left: `${x - PAN.x}px`, top: `${y - PAN.y}px` });
    return html`
      <div class="clip">
        <svg class="layer" aria-hidden="true">
          <defs><pattern id="dots" width="19.2" height="19.2" x="13.4" y="-3.2" patternUnits="userSpaceOnUse"><circle cx="1" cy="10" r=".9" fill="#444"/></pattern></defs>
          <rect width="100%" height="100%" fill="url(#dots)"/>
          <g transform="translate(${-PAN.x} ${-PAN.y})" fill="none" stroke-width="2.4">
            ${edges.map((e) => svg`<path class=${e.tone} d=${e.d} stroke-dasharray=${e.dashed ? "8 5" : "none"}/>
              ${e.tip ? svg`<path class="${e.tone}-tip" d="M${e.tip[0] - 11} ${e.tip[1] - 8}l11 8-11 8z"/>` : nothing}`)}
          </g>
        </svg>
        ${nodes.map((n) => html`<flow-node .node=${n} style=${at(n.x, n.y)}></flow-node>`)}
        ${labels.map((l) => html`<span class=${classMap({ label: true, small: !!l.small })} style=${at(l.x, l.y)}>${l.text}${l.need ? html`<b>*</b>` : nothing}</span>`)}
        <svg class="layer" aria-hidden="true">
          <g transform="translate(${-PAN.x} ${-PAN.y})" fill="#2b2b2b" stroke="#6a6a6a">
            ${diamonds.map(([x, y]) => svg`<path d="M${x} ${y - 10}l10 10-10 10-10-10z"/>`)}
          </g>
        </svg>
        <button class="tool-add" aria-label="Add tool" style=${at(1051, 996)}>${line(plus, 18, 2)}</button>
        <span class="zap" style=${at(190, 591)}>${solid(zap, 20)}</span>
      </div>
      <div class="side">
        ${[["Add node", plus], ["Search nodes", search], ["Add note", stickyNote], ["Open panel", panelRight]].map(
          ([name, icon]) => html`<button class="sq" aria-label=${name}>${line(icon as TemplateResult, 19, 2)}</button>`)}
      </div>
      <div class="controls">
        <button class="sq" aria-label="Fit view">${line(maximize, 20, 2)}</button>
        <button class="sq" aria-label="Zoom in">${line(zoomIn, 20, 2)}</button>
        <button class="sq" aria-label="Zoom out">${line(zoomOut, 20, 2)}</button>
        <button class="sq" aria-label="Tidy up">${solid(broom, 20)}</button>
      </div>
      <button class="run">${line(flask, 19, 2)}Execute workflow</button>
      <div class="mark" dir="rtl">خمسات</div>`;
  }
}

@customElement("app-root")
export class AppRoot extends LitElement {
  static styles = [base, css`
    :host { display: flex; flex-direction: column; height: 100vh; min-height: 900px; overflow: hidden; background: #222;
      font-family: Inter, "DejaVu Sans", sans-serif; color: #fff; }
    .app { flex: 1; min-height: 0; display: flex; padding-bottom: 2px; }
    .rail { width: 50px; flex: none; background: #222; border-right: 1px solid #424242; display: flex; flex-direction: column; color: #ccc; }
    .top { padding: 6px 0 7px; display: flex; flex-direction: column; align-items: center; color: #eee; border-bottom: 1px solid #424242; }
    .top button { width: 35px; height: 39px; }
    .menu { padding: 9px 0 13px; display: flex; flex-direction: column; align-items: center; gap: 3px; border-bottom: 1px solid #424242; }
    .menu button, .foot button { width: 35px; height: 38px; border-radius: 5px; position: relative; }
    .menu .on { background: #2e2e2e; color: #fff; }
    .grow { flex: 1; }
    .foot { padding: 7px 0; display: flex; flex-direction: column; align-items: center; gap: 3px; border-top: 1px solid #424242; }
    .dot { position: absolute; width: 5px; height: 5px; border-radius: 50%; background: #f66673; right: 3px; top: 4px; }
    .main { flex: 1; min-width: 0; display: flex; flex-direction: column; position: relative; }
    .head { height: 78px; flex: none; background: #222; border-bottom: 1px solid #424242; display: flex; align-items: stretch; }
    .crumbs { display: flex; align-items: center; padding-left: 29px; font-size: 17px; flex: 1; min-width: 0; white-space: nowrap; }
    .crumb { display: flex; align-items: center; gap: 6px; color: #bdbdbf; }
    .slash { color: #4d4d4d; font-size: 24px; margin: 0 10px; font-weight: 300; }
    .title { font-weight: 500; margin: 0; font-size: 17px; }
    .tag { color: #a9a9ab; font-size: 14px; font-weight: 600; margin-left: 19px; }
    .actions { display: flex; align-items: center; padding-right: 23px; }
    .count { background: #4d4d4d; border-radius: 4px; height: 29px; width: 40px; display: flex; align-items: center; justify-content: center; font-size: 16px; margin-right: 24px; }
    .publish { height: 39px; width: 87px; border: 1px solid #3a3a3a; border-radius: 6px 0 0 6px; background: #2d2d2d; color: #808080; font-size: 17px; font-weight: 500; }
    .more { height: 39px; width: 39px; border: 1px solid #5c5c5c; border-radius: 0 6px 6px 0; background: #434343; }
    .ghost { width: 40px; height: 40px; }
    .g1 { margin: 0 22px 0 32px; }
    .star { border-left: 1px solid #424242; display: flex; align-items: center; padding: 0 24px; }
    .gh { display: flex; height: 33px; border: 1px solid #3d444d; border-radius: 4px; overflow: hidden; font-family: "Noto Sans", sans-serif; font-weight: 600; font-size: 14px; }
    .gh a { display: flex; align-items: center; justify-content: center; gap: 4px; background: #1a202a; width: 74px; }
    .gh .num { background: #0d0f14; width: 72px; border-left: 1px solid #3d444d; }
    .modes { position: absolute; z-index: 3; top: 57px; left: 50%; transform: translateX(-50%); display: flex; height: 41px; padding: 5px; border-radius: 5px; background: #3d3d3d;
      color: #c9c9cb; font-size: 14px; font-weight: 600; }
    .modes button { padding: 0 15px; border-radius: 4px; }
    .modes .on { background: #171717; color: #fff; }
    .logs { height: 38px; flex: none; background: #171717; border-top: 1px solid #424242; display: flex; align-items: center; padding: 2px 18px 0 20px; font-size: 14px; font-weight: 600; }
    .clear { height: 29px; margin-left: auto; padding: 0 12px; gap: 9px; border: 1px solid #4d4d4d; border-radius: 4px; background: #3b3b3b; color: #a6a6a8; font-size: 14px; font-weight: 500; }
    .pop { margin: 0 16px 0 9px; }
    .scroll { width: 22px; flex: none; background: #2c2c2c; display: flex; flex-direction: column; align-items: center; padding: 7px 0 4px; gap: 7px; }
    .scroll i { flex: 1; width: 13px; border-radius: 7px; background: #9f9f9f; margin: 1px 0 24px; }
  `];

  render() {
    return html`
      <browser-chrome></browser-chrome>
      <div class="app">
        <nav class="rail" aria-label="Main">
          <div class="top">
            <button aria-label="Create">${line(plus, 20, 2)}</button>
            <button aria-label="Search">${line(search, 20, 2)}</button>
            <button aria-label="Toggle sidebar">${line(panelLeft, 20, 2)}</button>
          </div>
          <div class="menu">
            <button aria-label="Overview">${line(house, 20, 2)}</button>
            <button class="on" aria-label="Personal">${line(userRound, 20, 2)}</button>
            <button aria-label="Chat">${line(messageCircle, 20, 2)}</button>
          </div>
          <div class="grow"></div>
          <div class="foot">
            <button aria-label="Templates">${line(packageOpen, 20, 2)}</button>
            <button aria-label="Insights">${line(chartBar, 20, 2)}</button>
            <button aria-label="Help">${line(helpCircle, 20, 2)}<span class="dot"></span></button>
            <button aria-label="Settings">${line(settings, 20, 2)}</button>
          </div>
        </nav>
        <main class="main">
          <header class="head">
            <div class="crumbs">
              <a class="crumb" href="#">${line(userRound, 15, 2)}Personal</a>
              <span class="slash">/</span>
              <h1 class="title">WhatsApp Medical Booking Bot (Production)</h1>
              <button class="tag">+ Add tag</button>
            </div>
            <div class="actions">
              <span class="count">0 / 1</span>
              <button class="publish">Publish</button>
              <button class="more" aria-label="Publish options">${line(chevronDown, 18, 2)}</button>
              <button class="ghost g1" aria-label="History">${line(history, 18, 2)}</button>
              <button class="ghost" aria-label="More">${line(ellipsis, 18, 3)}</button>
            </div>
            <div class="star"><div class="gh">
              <a href="#">${solid(github, 19)}Star</a><a class="num" href="#">184,318</a>
            </div></div>
          </header>
          <div class="modes">
            <button class="on">Editor</button><button>Executions</button><button>Evaluations</button>
          </div>
          <flow-canvas></flow-canvas>
          <footer class="logs">
            Logs
            <button class="clear">${line(trash, 17, 2)}Clear execution</button>
            <button class="pop" aria-label="Pop out">${html`<svg viewBox="0 0 16 16" width="16" height="16" aria-hidden="true"><path d="M1 4v9a2 2 0 0 0 2 2h9" fill="none" stroke="#ddd" stroke-width="1.500"/><rect x="3" y="1" width="12" height="12" rx="2" fill="#fff"/><path d="m6 10 5-5M7 4.500h4.500V9" fill="none" stroke="#171717" stroke-width="1.500"/></svg>`}</button>
            <button aria-label="Expand logs">${line(chevronUp, 18, 3)}</button>
          </footer>
        </main>
        <div class="scroll" aria-hidden="true">
          <svg viewBox="0 0 14 12" width="14" height="12"><path d="M7 1 13 11H1z" fill="#9f9f9f" stroke="#9f9f9f" stroke-linejoin="round"/></svg>
          <i></i>
          <svg viewBox="0 0 14 12" width="14" height="12"><path d="M7 11 13 1H1z" fill="#9f9f9f" stroke="#9f9f9f" stroke-linejoin="round"/></svg>
        </div>
      </div>`;
  }
}
